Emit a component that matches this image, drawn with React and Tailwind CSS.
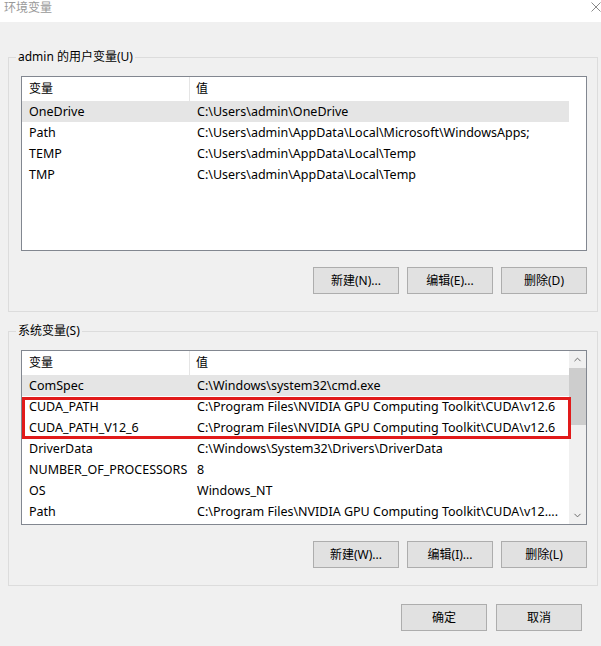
import { ChevronUp, ChevronDown } from 'lucide-react';

const font = { fontFamily: '"Noto Sans", "Noto Sans CJK SC", sans-serif' };

const userVars = [
  ['OneDrive', 'C:\\Users\\admin\\OneDrive'],
  ['Path', 'C:\\Users\\admin\\AppData\\Local\\Microsoft\\WindowsApps;'],
  ['TEMP', 'C:\\Users\\admin\\AppData\\Local\\Temp'],
  ['TMP', 'C:\\Users\\admin\\AppData\\Local\\Temp'],
];

const sysVars = [
  ['ComSpec', 'C:\\Windows\\system32\\cmd.exe'],
  ['CUDA_PATH', 'C:\\Program Files\\NVIDIA GPU Computing Toolkit\\CUDA\\v12.6'],
  ['CUDA_PATH_V12_6', 'C:\\Program Files\\NVIDIA GPU Computing Toolkit\\CUDA\\v12.6'],
  ['DriverData', 'C:\\Windows\\System32\\Drivers\\DriverData'],
  ['NUMBER_OF_PROCESSORS', '8'],
  ['OS', 'Windows_NT'],
  ['Path', 'C:\\Program Files\\NVIDIA GPU Computing Toolkit\\CUDA\\v12....'],
];

const WinButton = ({ children }) => (
  <button className="w-[86px] h-[27px] bg-[#e1e1e1] border border-[#adadad] text-[12px] text-black flex items-center justify-center">
    {children}
  </button>
);

const Row = ({ name, value, selected }) => (
  <div className={`flex h-[21px] pt-[1px] items-center text-[12.5px] text-black ${selected ? 'bg-[#e5e5e5]' : ''}`}>
    <div className="w-[168px] pl-[7px] whitespace-nowrap">{name}</div>
    <div className="pl-[7px] whitespace-nowrap">{value}</div>
  </div>
);

const ListHeader = () => (
  <div className="flex h-[24px] items-center text-[12px] text-black">
    <div className="w-[168px] h-full pl-[7px] flex items-center border-r border-[#e5e5e5]">变量</div>
    <div className="pl-[6px]">值</div>
  </div>
);

const GroupBox = ({ label, children }) => (
  <div className="relative border border-[#dcdcdc] pl-[12px] pr-[10px] pt-[18px] pb-[17px]">
    <span className="absolute left-[7px] top-[-9px] bg-[#f0f0f0] px-[2px] text-[12px] leading-[16px] text-black">
      {label}
    </span>
    {children}
  </div>
);

export default function App() {
  return (
    <div className="w-[601px] h-[646px] bg-[#f0f0f0] overflow-hidden" style={font}>
      {/* title bar */}
      <div className="h-[22px] bg-white flex justify-between">
        <span className="pl-[4px] text-[12px] leading-[16px] text-[#999999]">环境变量</span>
        <svg width="10" height="10" viewBox="0 0 10 10" className="mt-[2px]" stroke="#8a8a8a" strokeWidth="1">
          <path d="M0.5 0.5 L9.5 9.5 M9.5 0.5 L0.5 9.5" />
        </svg>
      </div>

      <div className="pl-[8px] pr-[3px] pt-[35px]">
        {/* user variables */}
        <GroupBox label="admin 的用户变量(U)">
          <div className="h-[175px] bg-white border border-[#828790]">
            <div className="w-[547px]">
              <ListHeader />
              {userVars.map(([n, v], i) => (
                <Row key={n + i} name={n} value={v} selected={i === 0} />
              ))}
            </div>
          </div>
          <div className="flex justify-end gap-[8px] pt-[16px]">
            <WinButton>新建(N)...</WinButton>
            <WinButton>编辑(E)...</WinButton>
            <WinButton>删除(D)</WinButton>
          </div>
        </GroupBox>

        <div className="h-[19px]" />

        {/* system variables */}
        <GroupBox label="系统变量(S)">
          <div className="h-[175px] bg-white border border-[#828790] flex">
            <div className="relative w-[547px]">
              <ListHeader />
              {sysVars.map(([n, v], i) => (
                <Row key={n + i} name={n} value={v} selected={i === 0} />
              ))}
              <div className="absolute left-[0px] top-[46px] w-[549px] h-[42px] border-[3px] border-[#e11a1a]" />
            </div>
            <div className="w-[17px] bg-[#f0f0f0] flex flex-col items-center">
              <div className="h-[17px] flex items-center justify-center text-[#606060]">
                <ChevronUp size={11} strokeWidth={2} />
              </div>
              <div className="w-[17px] h-[57px] bg-[#cdcdcd]" />
              <div className="flex-1" />
              <div className="h-[17px] flex items-center justify-center text-[#606060]">
                <ChevronDown size={11} strokeWidth={2} />
              </div>
            </div>
          </div>
          <div className="flex justify-end gap-[8px] pt-[16px]">
            <WinButton>新建(W)...</WinButton>
            <WinButton>编辑(I)...</WinButton>
            <WinButton>删除(L)</WinButton>
          </div>
        </GroupBox>

        <div className="flex justify-end gap-[9px] pt-[18px] pr-[16px]">
          <WinButton>确定</WinButton>
          <WinButton>取消</WinButton>
        </div>
      </div>
    </div>
  );
}
